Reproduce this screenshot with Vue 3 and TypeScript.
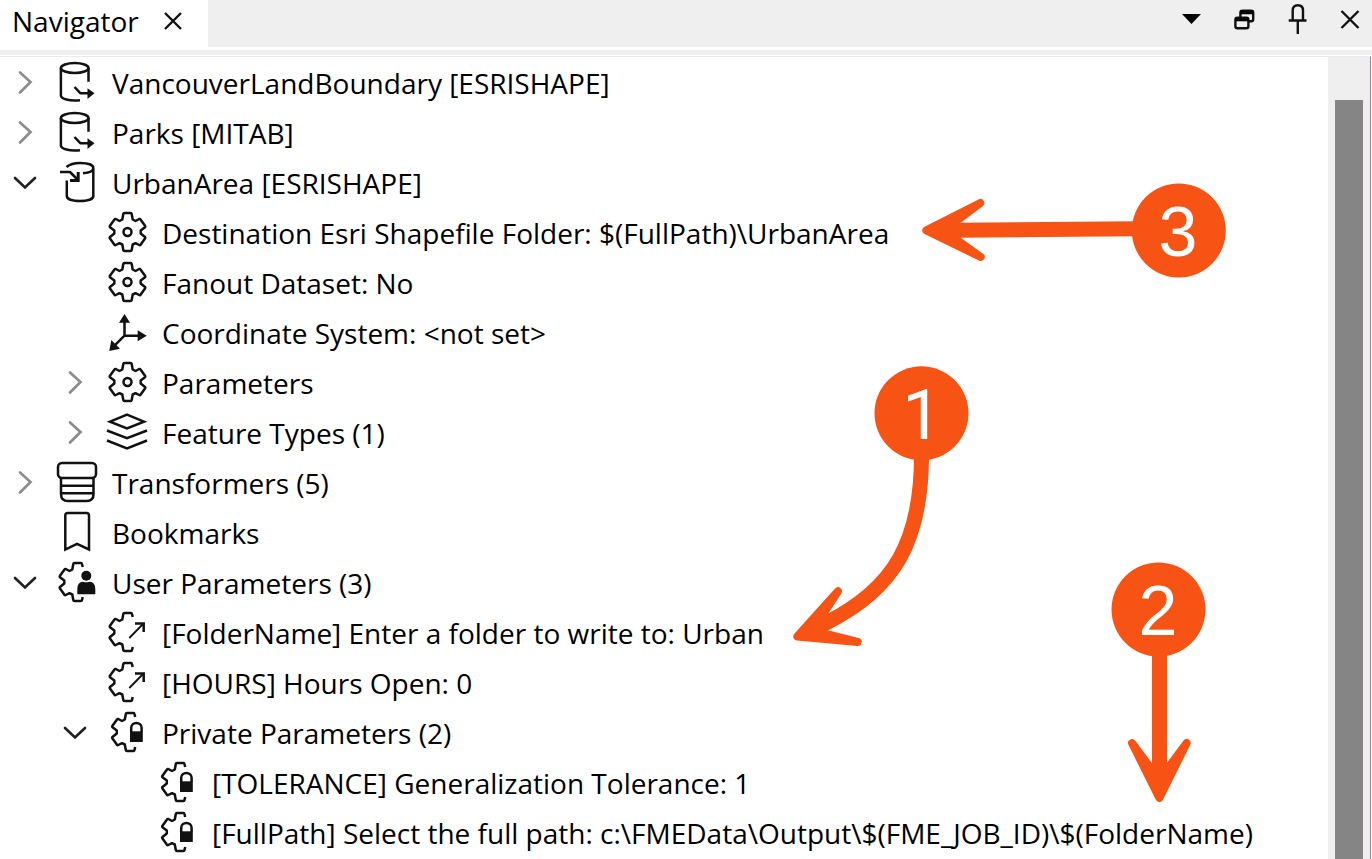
<script setup lang="ts">
import { computed, ref } from 'vue'

type IconName =
  | 'reader' | 'writer' | 'gear' | 'axes' | 'layers' | 'transformer'
  | 'bookmark' | 'gear-user' | 'gear-arrow' | 'gear-lock'

interface TreeItem {
  id: number
  level: number
  label: string
  icon: IconName
  expandable?: boolean
}

const items: TreeItem[] = [
  { id: 1, level: 0, label: 'VancouverLandBoundary [ESRISHAPE]', icon: 'reader', expandable: true },
  { id: 2, level: 0, label: 'Parks [MITAB]', icon: 'reader', expandable: true },
  { id: 3, level: 0, label: 'UrbanArea [ESRISHAPE]', icon: 'writer', expandable: true },
  { id: 4, level: 1, label: 'Destination Esri Shapefile Folder: $(FullPath)\\UrbanArea', icon: 'gear' },
  { id: 5, level: 1, label: 'Fanout Dataset: No', icon: 'gear' },
  { id: 6, level: 1, label: 'Coordinate System: <not set>', icon: 'axes' },
  { id: 7, level: 1, label: 'Parameters', icon: 'gear', expandable: true },
  { id: 8, level: 1, label: 'Feature Types (1)', icon: 'layers', expandable: true },
  { id: 9, level: 0, label: 'Transformers (5)', icon: 'transformer', expandable: true },
  { id: 10, level: 0, label: 'Bookmarks', icon: 'bookmark' },
  { id: 11, level: 0, label: 'User Parameters (3)', icon: 'gear-user', expandable: true },
  { id: 12, level: 1, label: '[FolderName] Enter a folder to write to: Urban', icon: 'gear-arrow' },
  { id: 13, level: 1, label: '[HOURS] Hours Open: 0', icon: 'gear-arrow' },
  { id: 14, level: 1, label: 'Private Parameters (2)', icon: 'gear-lock', expandable: true },
  { id: 15, level: 2, label: '[TOLERANCE] Generalization Tolerance: 1', icon: 'gear-lock' },
  { id: 16, level: 2, label: '[FullPath] Select the full path: c:\\FMEData\\Output\\$(FME_JOB_ID)\\$(FolderName)', icon: 'gear-lock' },
]

const open = ref<Set<number>>(new Set([3, 11, 14]))

function toggle(id: number) {
  const next = new Set(open.value)
  if (next.has(id)) next.delete(id)
  else next.add(id)
  open.value = next
}

const visibleItems = computed(() => {
  const out: TreeItem[] = []
  let hiddenBelow = Infinity
  for (const item of items) {
    if (item.level > hiddenBelow) continue
    hiddenBelow = item.expandable && !open.value.has(item.id) ? item.level : Infinity
    out.push(item)
  }
  return out
})

const halfGear =
  'M25.7 5 L25 2 Q24.8 1 24 1 H17.5 Q16.5 1 16.3 2 L15.3 7.5 L12.5 9 L8.8 7 Q8 6.7 7.5 7.5 L2.8 14 Q2.4 14.8 3 15.3 L7.3 18.5 V21.5 L3 25 Q2.4 25.6 2.8 26.3 L7.3 32.6 Q8 33.4 8.8 33 L12.5 31.2 L15.3 32.5 L16.3 38 Q16.5 39 17.5 39 H24 Q24.8 39 25 38 L25.7 35'
const fullGear =
  'M17.5 1 H23.5 Q24.5 1 24.7 2 L25.7 7.5 L28.5 9 L32.2 7 Q33 6.7 33.5 7.5 L38.2 14 Q38.6 14.8 38 15.3 L33.7 18.5 V21.5 L38 25 Q38.6 25.6 38.2 26.3 L33.7 32.6 Q33 33.4 32.2 33 L28.5 31.2 L25.7 32.5 L24.7 38 Q24.5 39 23.5 39 H17.5 Q16.5 39 16.3 38 L15.3 32.5 L12.5 31.2 L8.8 33 Q8 33.4 7.3 32.6 L2.8 26.3 Q2.4 25.6 3 25 L7.3 21.5 V18.5 L3 15.3 Q2.4 14.8 2.8 14 L7.5 7.5 Q8 6.7 8.8 7 L12.5 9 L15.3 7.5 L16.3 2 Q16.5 1 17.5 1 Z'
</script>

<template>
  <main class="panel">
    <header class="titlebar">
      <div class="tab">
        <span class="tab-title">Navigator</span>
        <button class="tab-close" type="button" aria-label="Close tab">
          <svg viewBox="0 0 20 20"><path d="M2 2 18 18M18 2 2 18" class="line" /></svg>
        </button>
      </div>
      <div class="tools">
        <button type="button" aria-label="Panel menu">
          <svg viewBox="0 0 40 40"><path d="M11 14H30L20.5 24Z" class="solid" /></svg>
        </button>
        <button type="button" aria-label="Float panel">
          <svg viewBox="0 0 40 40">
            <rect x="16.4" y="10.8" width="12.8" height="10.4" rx="2" class="line" />
            <path d="M16 10.5H29.5V14.3H16Z" class="solid" />
            <rect x="11.4" y="17.8" width="13" height="10.4" rx="2" class="box" />
            <path d="M11 17.5H24.5V21.3H11Z" class="solid" />
          </svg>
        </button>
        <button type="button" aria-label="Pin panel">
          <svg viewBox="0 0 40 40">
            <path d="M15.7 20V10.5Q15.7 5.3 20.8 5.3Q26 5.3 26 10.5V20M11.7 20.5H29.5M20.8 20.5V34" class="line" />
          </svg>
        </button>
        <button type="button" aria-label="Close panel">
          <svg viewBox="0 0 40 40"><path d="M11.5 11 28.5 28M28.5 11 11.5 28" class="line" /></svg>
        </button>
      </div>
    </header>
    <div class="divider"></div>

    <section class="content">
      <ul class="tree" role="tree" aria-label="Navigator">
        <li
          v-for="item in visibleItems"
          :key="item.id"
          class="row"
          :class="'level-' + item.level"
          role="treeitem"
          :aria-level="item.level + 1"
          :aria-expanded="item.expandable ? open.has(item.id) : undefined"
        >
          <button
            v-if="item.expandable"
            class="toggle"
            :class="{ expanded: open.has(item.id) }"
            type="button"
            :aria-label="'Toggle ' + item.label"
            @click="toggle(item.id)"
          >
            <svg viewBox="0 0 50 50">
              <path v-if="open.has(item.id)" d="M15 21 25 30.5 35 21" />
              <path v-else d="M20 15.5 30.5 25 20 35.5" />
            </svg>
          </button>
          <span v-else class="toggle"></span>

          <svg class="icon" viewBox="0 0 40 40" aria-hidden="true">
            <template v-if="item.icon === 'reader'">
              <ellipse cx="17.7" cy="6" rx="13.8" ry="5" />
              <path d="M3.9 6V33.5C4 37 12 39.2 23 38.2M31.5 6V19.7M17.5 25 23.3 31.2H31" />
              <path d="M30.5 26.3 37.5 31.3 30.5 37Z" class="fill" />
            </template>
            <template v-else-if="item.icon === 'writer'">
              <path d="M9.5 5C13 2 18 1 23 1C31 1 36.3 3 36.3 6C36.3 9 32 10.8 26 11.2M36.3 6V34C36.3 37 31 39 23 39C15 39 9.8 37 9.8 34V18.5" />
              <path d="M3 10H13L21 18" />
              <path d="M21.2 10V18.5H13" class="heavy" />
            </template>
            <template v-else-if="item.icon === 'gear'">
              <path :d="fullGear" />
              <circle cx="20.5" cy="20" r="4" />
            </template>
            <template v-else-if="item.icon === 'axes'">
              <path d="M17.5 9V23.7H32M17.5 23.7 7 34.2" />
              <path d="M17.5 2 23 10.8H12ZM39.7 23.7 30.7 29.3V18.2ZM2.3 39 4.3 28 13 36.7Z" class="fill" />
            </template>
            <template v-else-if="item.icon === 'layers'">
              <path d="M20 2.7 37 9.7 20 16.4 3 9.7ZM0 18.5 20 26.2 40 18.5M0 28.5 20 36.3 40 28.5" class="sharp" />
            </template>
            <template v-else-if="item.icon === 'transformer'">
              <rect x="1" y="1" width="38" height="15" rx="4" />
              <path d="M4 16V32Q4 39 11 39H29.5Q36.5 39 36.5 32V16M4 23.8H36.5M4 31.2H36.5" />
            </template>
            <template v-else-if="item.icon === 'bookmark'">
              <path d="M8.3 37.5V3.5Q8.3 1 10.8 1H29.5Q32 1 32 3.5V37.5L20 31.8Z" class="sharp" />
            </template>
            <template v-else-if="item.icon === 'gear-user'">
              <path :d="halfGear" />
              <circle cx="29.3" cy="13.8" r="5" class="fill" />
              <path d="M20.3 32.3V27Q20.3 20 26 19.7Q29.3 21 32.5 19.7Q38.3 20 38.3 27V32.3Z" class="fill" />
            </template>
            <template v-else-if="item.icon === 'gear-arrow'">
              <path :d="halfGear" />
              <path d="M22.3 26 36 12" class="thin" />
              <path d="M28 11.5H36.7V20" class="sharp" />
            </template>
            <template v-else>
              <g transform="translate(2.5 0)"><path :d="halfGear" /></g>
              <path d="M24.2 20V15.8C24.2 9.3 34.6 9.3 34.6 15.8V20" />
              <path d="M23 19.3H35.8V30H23Z" class="fill" />
            </template>
          </svg>
          <span class="label">{{ item.label }}</span>
        </li>
      </ul>
      <div class="scrollbar"><div class="thumb"></div></div>
    </section>

    <svg class="callout callout-three" viewBox="0 0 340 120" role="img" aria-label="Step 3">
      <path d="M56 60.3 235 58.7" class="shaft" />
      <path d="M26.3 60.3 80.3 33 53.3 53.3V67.3L80.7 87Z" class="head" />
      <circle cx="278.8" cy="60.5" r="47" />
      <text x="278" y="86">3</text>
    </svg>
    <svg class="callout callout-one" viewBox="0 0 220 310" role="img" aria-label="Step 1">
      <path d="M141.5 105C141.5 192 114 239 46 273L34 279" class="shaft" />
      <path d="M17.3 286.4 58 241.3 38 272V282L77.7 292Z" class="head" />
      <circle cx="141.5" cy="63.3" r="47" />
      <text x="142" y="89" class="plain-one">1</text>
    </svg>
    <svg class="callout callout-two" viewBox="0 0 220 260" role="img" aria-label="Step 2">
      <path d="M69.5 100V222" class="shaft" />
      <path d="M69.4 248 42 193 61 218.5H77.7L96.7 193Z" class="head" />
      <circle cx="68.5" cy="59.5" r="47" />
      <text x="68" y="85">2</text>
    </svg>
  </main>
</template>

<style>
body {
  margin: 0;
}
</style>

<style scoped>
.panel {
  position: relative;
  display: flex;
  flex-direction: column;
  min-height: 100vh;
  overflow: hidden;
  background: #fff;
  color: #000;
  font-family: "Open Sans", "Noto Sans", sans-serif;
  font-size: 28px;
}
button {
  padding: 0;
  border: 0;
  background: none;
  color: inherit;
  cursor: pointer;
}
svg {
  display: block;
}
.titlebar {
  display: flex;
  justify-content: space-between;
  height: 47px;
  background: #efefef;
}
.tab {
  display: flex;
  align-items: center;
  gap: 24px;
  box-sizing: border-box;
  padding: 0 25px 5px 12px;
  background: #fff;
}
.tab-close svg {
  width: 20px;
  height: 20px;
}
.tools {
  display: flex;
  align-items: flex-start;
  gap: 13px;
  padding-right: 2px;
}
.tools svg {
  width: 40px;
  height: 40px;
}
.line,
.box {
  fill: none;
  stroke: #111;
  stroke-width: 2.4;
}
.box {
  fill: #efefef;
}
.solid {
  fill: #000;
}
.divider {
  height: 5px;
  margin-top: 3px;
  border-bottom: 1px solid #fff;
  background: #efefef;
}
.content {
  display: flex;
  flex: 1;
  border-top: 1px solid #ebebeb;
  border-right: 1px solid #8a8d9c;
  margin-right: 1px;
}
.tree {
  flex: 1;
  min-width: 0;
  margin: 0;
  padding: 0;
  list-style: none;
}
.row {
  display: flex;
  align-items: center;
  height: 50px;
  white-space: nowrap;
}
.level-1 {
  padding-left: 50px;
}
.level-2 {
  padding-left: 100px;
}
.toggle {
  flex: none;
  width: 50px;
  height: 50px;
}
.toggle path {
  fill: none;
  stroke: #8c8c8c;
  stroke-width: 2.7;
  stroke-linecap: round;
}
.toggle.expanded path {
  stroke: #222;
}
.icon {
  flex: none;
  width: 40px;
  height: 40px;
  margin: 0 15px 0 7px;
  overflow: visible;
  fill: none;
  stroke: #111;
  stroke-width: 2.5;
  stroke-linejoin: round;
}
.icon .fill {
  fill: #111;
  stroke: none;
}
.icon .heavy {
  stroke-width: 3;
  stroke-linejoin: miter;
}
.icon .thin {
  stroke-width: 1.8;
}
.icon .sharp {
  stroke-linejoin: miter;
}
.label {
  padding-top: 2px;
  line-height: 48px;
}
.scrollbar {
  display: flex;
  box-sizing: border-box;
  width: 42px;
  padding: 43px 7px 0;
  background: #efefef;
}
.thumb {
  flex: 1;
  background: #858585;
}
.callout {
  position: absolute;
  pointer-events: none;
  fill: #f65314;
  font-family: "Liberation Sans", Arial, sans-serif;
  font-size: 70px;
}
.callout .shaft {
  fill: none;
  stroke: #f65314;
  stroke-width: 15;
}
.callout .head {
  stroke: #f65314;
  stroke-width: 8;
  stroke-linejoin: round;
}
.callout text {
  fill: #fff;
  text-anchor: middle;
}
.callout .plain-one {
  font-family: Roboto, sans-serif;
}
.callout-three {
  top: 170px;
  left: 900px;
  width: 340px;
  height: 120px;
}
.callout-one {
  top: 350px;
  left: 780px;
  width: 220px;
  height: 310px;
}
.callout-two {
  top: 550px;
  left: 1090px;
  width: 220px;
  height: 260px;
}
</style>
